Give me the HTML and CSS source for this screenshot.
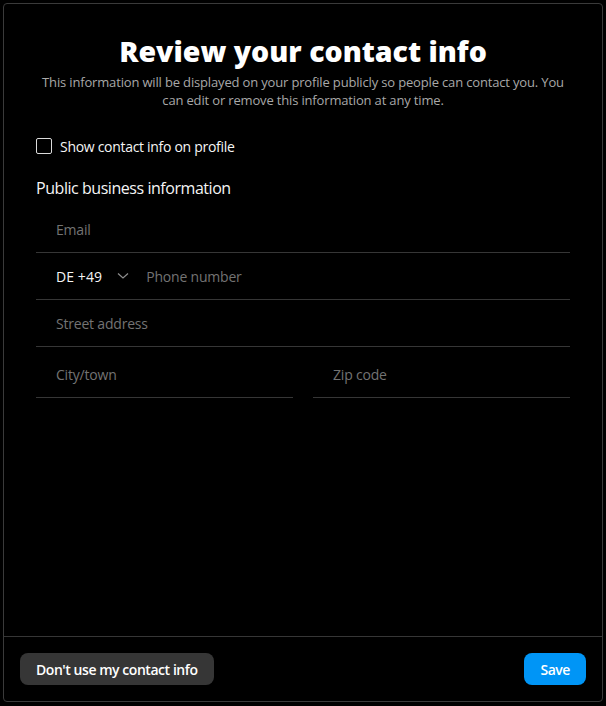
FILE: index.html
```html
<!DOCTYPE html>
<html lang="en">
<head>
<meta charset="utf-8">
<title>Review your contact info</title>
<link rel="stylesheet" href="styles.css">
</head>
<body>
<div class="modal">
  <div class="content">
    <h1 class="title">Review your contact info</h1>
    <p class="subtitle">This information will be displayed on your profile publicly so people can contact you. You can edit or remove this information at any time.</p>
    <label class="check-row">
      <span class="checkbox"></span>
      <span class="check-label">Show contact info on profile</span>
    </label>
    <h2 class="section-title">Public business information</h2>
    <div class="fields">
      <div class="field"><span class="placeholder">Email</span></div>
      <div class="field phone">
        <span class="country">DE +49</span>
        <svg class="chev" width="12" height="8" viewBox="0 0 12 8"><path d="M1 1.5 L6 6 L11 1.5" fill="none" stroke="#8e8e8e" stroke-width="1.2"/></svg>
        <span class="placeholder">Phone number</span>
      </div>
      <div class="field"><span class="placeholder">Street address</span></div>
      <div class="split">
        <div class="field tall"><span class="placeholder">City/town</span></div>
        <div class="field tall"><span class="placeholder">Zip code</span></div>
      </div>
    </div>
  </div>
  <div class="footer">
    <button class="btn secondary">Don't use my contact info</button>
    <button class="btn primary">Save</button>
  </div>
</div>
</body>
</html>
```

FILE: styles.css
```css
html, body {
  margin: 0;
  background: #000;
}
body {
  padding: 3px 4px 4px 3px;
  font-family: "Open Sans", "Liberation Sans", sans-serif;
  color: #f5f5f5;
}
.modal {
  box-sizing: border-box;
  width: 600px;
  height: 699px;
  border: 1px solid #3a3a3a;
  border-radius: 4px;
  display: flex;
  flex-direction: column;
  background: #000;
}
.content {
  flex: 1;
  padding: 28px 32px 0 32px;
  display: flex;
  flex-direction: column;
}
.title {
  margin: 0;
  text-align: center;
  font-size: 28.5px;
  font-weight: 800;
  line-height: 38px;
  color: #fff;
}
.subtitle {
  margin: 3px 0 0;
  text-align: center;
  font-size: 13px;
  letter-spacing: -0.16px;
  line-height: 18px;
  color: #a8a8a8;
}
.check-row {
  display: flex;
  align-items: center;
  gap: 8px;
  margin-top: 28px;
  height: 18px;
}
.checkbox {
  box-sizing: border-box;
  width: 16px;
  height: 16px;
  border: 1px solid #dbdbdb;
  border-radius: 2px;
}
.check-label {
  font-size: 14px;
  letter-spacing: -0.3px;
  color: #f5f5f5;
}
.section-title {
  margin: 22px 0 0;
  font-size: 16px;
  letter-spacing: -0.45px;
  font-weight: 400;
  line-height: 22px;
  color: #f5f5f5;
}
.fields {
  margin-top: 7px;
}
.field {
  display: flex;
  align-items: center;
  height: 46px;
  padding-left: 20px;
  border-bottom: 1px solid #363636;
  font-size: 14px;
  letter-spacing: -0.2px;
}
.placeholder {
  color: #737373;
}
.country {
  color: #f5f5f5;
  letter-spacing: 0.1px;
}
.chev {
  margin: 0 17px 0 15px;
}
.split {
  display: grid;
  grid-template-columns: 1fr 1fr;
  gap: 20px;
}
.field.tall {
  box-sizing: border-box;
  height: 51px;
  padding-top: 4px;
}
.footer {
  border-top: 1px solid #363636;
  padding: 16px;
  display: flex;
  justify-content: space-between;
  align-items: center;
}
.btn {
  font-family: "Open Sans", "Liberation Sans", sans-serif;
  font-size: 14px;
  letter-spacing: -0.45px;
  font-weight: 600;
  height: 32px;
  border: none;
  border-radius: 8px;
  padding: 0 16px;
  color: #fff;
}
.btn.secondary { background: #363636; }
.btn.primary { background: #0095f6; }
```
